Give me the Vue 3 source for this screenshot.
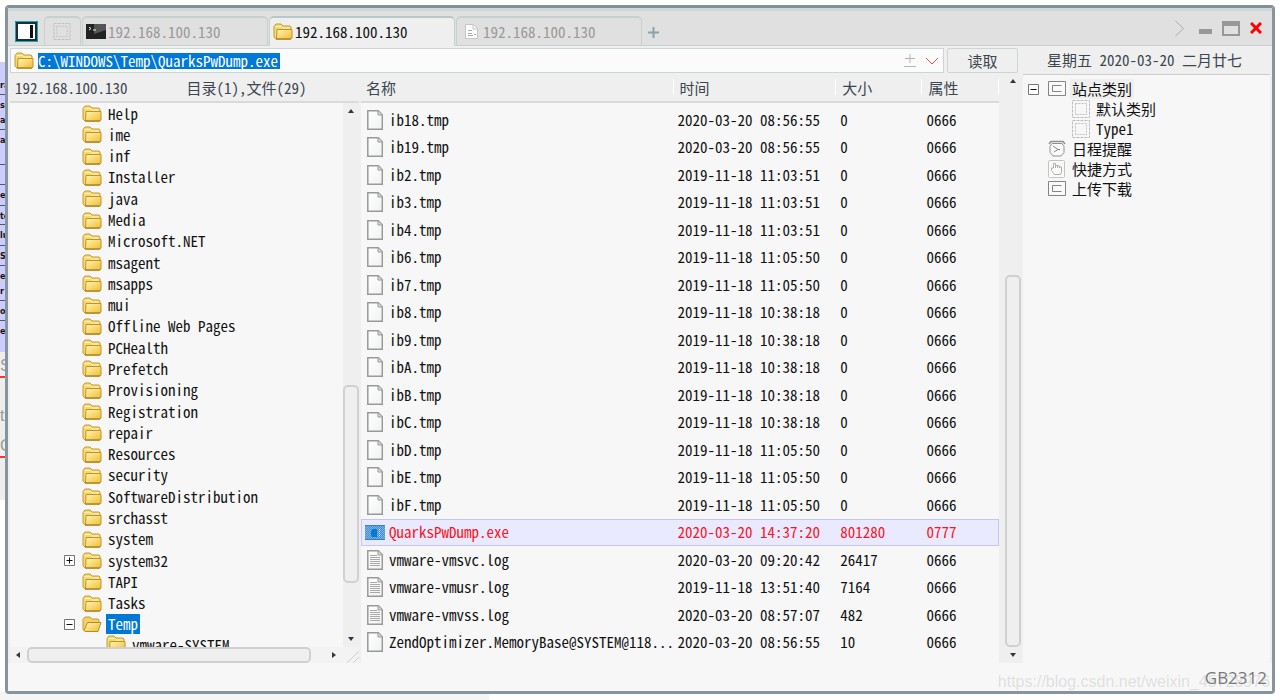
<script setup>
const dirs = ['Help', 'ime', 'inf', 'Installer', 'java', 'Media', 'Microsoft.NET', 'msagent', 'msapps', 'mui', 'Offline Web Pages', 'PCHealth', 'Prefetch', 'Provisioning', 'Registration', 'repair', 'Resources', 'security', 'SoftwareDistribution', 'srchasst', 'system', 'system32', 'TAPI', 'Tasks', 'Temp']
const marks = { system32: '+', Temp: '-' }
const a = '2020-03-20 08:56:55'
const b = '2019-11-18 11:03:51'
const c = '2019-11-18 11:05:50'
const d = '2019-11-18 10:38:18'
const files = [
  ['ib18.tmp', a, '0'], ['ib19.tmp', a, '0'], ['ib2.tmp', b, '0'], ['ib3.tmp', b, '0'], ['ib4.tmp', b, '0'],
  ['ib6.tmp', c, '0'], ['ib7.tmp', c, '0'], ['ib8.tmp', d, '0'], ['ib9.tmp', d, '0'], ['ibA.tmp', d, '0'],
  ['ibB.tmp', d, '0'], ['ibC.tmp', d, '0'], ['ibD.tmp', c, '0'], ['ibE.tmp', c, '0'], ['ibF.tmp', c, '0'],
  ['QuarksPwDump.exe', '2020-03-20 14:37:20', '801280', '0777'],
  ['vmware-vmsvc.log', '2020-03-20 09:20:42', '26417'],
  ['vmware-vmusr.log', '2019-11-18 13:51:40', '7164'],
  ['vmware-vmvss.log', '2020-03-20 08:57:07', '482'],
  ['ZendOptimizer.MemoryBase@SYSTEM@118...', a, '10']
]
const strip = [
  ['ra', 33], ['s a', 35], ['a', 35], ['', 20], ['er', 21], ['te', 19], ['lu', 21], ['Sa', 20], ['er r', 35], ['op', 20], ['e', 31]
]
const side = [
  { t: '站点类别', i: 'box', mark: true, sel: true },
  { t: '默认类别', i: 'dash', sub: true },
  { t: 'Type1', i: 'dash', sub: true },
  { t: '日程提醒', i: 'clock' },
  { t: '快捷方式', i: 'hand' },
  { t: '上传下载', i: 'box' }
]
</script>

<template>
  <div class="desk">
    <svg class="defs" aria-hidden="true">
      <defs>
        <linearGradient id="gold" x1="0" y1="0" x2="1" y2="1"><stop offset="0" stop-color="#fff6b0" /><stop offset="1" stop-color="#f0bd35" /></linearGradient>
        <linearGradient id="paper" x1="0" y1="0" x2="1" y2="1"><stop offset="0" stop-color="#fff" /><stop offset="1" stop-color="#f0f2f2" /></linearGradient>
        <pattern id="dither" width="2" height="2" patternUnits="userSpaceOnUse"><rect width="2" height="2" fill="#3d8fd6" /><path d="M0 0h1v1H0zM1 1h1v1H1z" fill="#85b5dc" /></pattern>
        <symbol id="folder" viewBox="0 0 20 17">
          <path d="M1 3.500L3 1h5l2 2h7l1 1v11l-1 1H3l-2-2z" fill="#f5d970" stroke="#c39a34" />
          <path d="M2.500 3.500h6l1.500 1.500h7" fill="none" stroke="#fff3b5" />
          <path d="M4 6.500h15v8.500l-1 1H3.500z" fill="url(#gold)" stroke="#c1922a" />
          <path d="M3 16h15" stroke="#a77c1c" />
        </symbol>
        <symbol id="open" viewBox="0 0 20 17">
          <path d="M1 3.500L3 1h5l2 2h6l1 1v3L15 15.500H3l-2-2z" fill="#f2d268" stroke="#c39a34" />
          <path d="M2 14.500L5.500 6.500H19l-3 9H3z" fill="url(#gold)" stroke="#b98a22" />
        </symbol>
        <symbol id="doc" viewBox="0 0 16 20">
          <path d="M.8.800h10.500l4 4v14.400H.8z" fill="url(#paper)" stroke="#999" stroke-width="1.500" />
          <path d="M11 1v4h4" fill="#ddd" stroke="#999" />
        </symbol>
        <symbol id="log" viewBox="0 0 16 20">
          <use href="#doc" />
          <path d="M3 5.500h7M3 7.500h10M3 9.500h10M3 11.500h10M3 13.500h10M3 15.500h10" stroke="#a8a8a8" />
        </symbol>
        <symbol id="exe" viewBox="0 0 20 15">
          <rect width="20" height="15" fill="url(#dither)" /><path d="M0 .5h20M0 14.500h20" stroke="#2f83ca" /><path d="M6 6l2-2h4v8H7l-1-2z" fill="#0878d8" /><path d="M14.500 4v8" stroke="#e4f0fa" stroke-dasharray="1 1" />
        </symbol>
        <symbol id="dash" viewBox="0 0 18 18">
          <path d="M.5.500h17v17H.5z" fill="none" stroke="#bdbdbd" stroke-dasharray="3 1" /><path d="M3.500 3.500h11v11h-11z" fill="none" stroke="#c2c2c2" stroke-dasharray="2 1" />
        </symbol>
        <symbol id="box" viewBox="0 0 18 18">
          <path d="M.5 1.500h17v14H.5z" fill="#fafafa" stroke="#858585" /><path d="M13.500 5.500h-9v6h9" fill="none" stroke="#858585" />
        </symbol>
        <symbol id="clock" viewBox="0 0 18 18">
          <path d="M1 4l2-2.500h12L17 4" fill="none" stroke="#909090" stroke-width="1.500" /><path d="M4 3.500h10l2 3v6l-3 3.500H5l-3-3.500v-6z" fill="#fafafa" stroke="#909090" /><path d="M5 6l5 3.500L6 12M10 9.500h2" fill="none" stroke="#858585" />
        </symbol>
        <symbol id="hand" viewBox="0 0 18 18">
          <rect x=".5" y=".5" width="16" height="17" rx="1" fill="#fafafa" stroke="#c4c4c4" /><path d="M6.500 14.500l-3-4V8h2V3.500h2V8V5.500h2V8V6h2v2V7h2v5l-1 2.500z" fill="#fff" stroke="#b5aca6" />
        </symbol>
      </defs>
    </svg>
    <div class="behind" aria-hidden="true">
      <div class="lav">
        <p v-for="(s, i) in strip" :key="i" :style="{ height: s[1] + 'px' }">{{ s[0] }}</p>
      </div>
      <div class="grey"><span>S</span><i></i><span>t</span><span>G</span><i></i></div>
    </div>
    <div class="under" aria-hidden="true"></div>
    <main class="win">
      <header class="title">
        <button class="toggle" aria-label="Toggle panel"><svg width="23" height="21"><path d="M1.500 1.500h20v18h-20z" fill="#fff" stroke="#173238" stroke-width="3" /><path d="M.5.500h22v20H.5z" fill="none" stroke="#23a3b5" /><path d="M15 4h3v13h-3z" fill="#111" /></svg></button>
        <nav class="tabs">
          <button class="tab mini" aria-label="Home"><svg width="18" height="17"><use href="#dash" /></svg></button>
          <button class="tab"><svg width="20" height="15"><path d="M0 0h20v15H0z" fill="#222" /><path d="M8 0h12v6L8 10z" fill="#555" /><path d="M3 3l2 1.500L3 6M7 6h3" stroke="#eee" fill="none" /></svg>192.168.100.130</button>
          <button class="tab on"><svg width="20" height="17"><use href="#folder" /></svg>192.168.100.130</button>
          <button class="tab doc"><svg width="13" height="15"><path d="M.5.500h8l4 4v10H.5z" fill="#fff" stroke="#c5c5c5" /><path d="M8 1v4h4" fill="none" stroke="#c5c5c5" /><path d="M3 6.500h4M3 9.500h4M3 11.500h5M9 10.500h2" stroke="#aaa" /></svg>192.168.100.130</button>
          <button class="add" aria-label="New tab"><svg width="11" height="11"><path d="M5.500 0v11M0 5.500h11" stroke="#8aa2ad" stroke-width="2" /></svg></button>
        </nav>
        <div class="ctl">
          <button aria-label="More"><svg width="10" height="17"><path d="M.5 1l8 7.500-8 7.500" fill="none" stroke="#aaa" /></svg></button>
          <button class="min" aria-label="Minimize"><svg width="13" height="5"><path d="M0 0h13v5H0z" fill="#989898" /></svg></button>
          <button aria-label="Maximize"><svg width="18" height="15"><path d="M1 1h16v13H1z" fill="none" stroke="#989898" stroke-width="2" /><path d="M0 2.500h18" stroke="#989898" stroke-width="5" /></svg></button>
          <button aria-label="Close"><svg width="12" height="12"><path d="M1 1l10 10M11 1L1 11" stroke="#f00" stroke-width="3" /></svg></button>
        </div>
      </header>
      <div class="body">
        <section class="left">
          <div class="bar">
            <div class="path">
              <svg width="20" height="17"><use href="#folder" /></svg>
              <label class="field"><input aria-label="Path" value="C:\WINDOWS\Temp\QuarksPwDump.exe" size="32" /></label>
              <svg class="pm" width="12" height="13"><path d="M6 0v9M1 4.500h10M0 12.500h12" stroke="#b5b5b5" /></svg>
              <svg width="14" height="8"><path d="M1 1l6 6 6-6" fill="none" stroke="#f24848" /></svg>
            </div>
            <button class="read">读取</button>
          </div>
          <div class="panes">
            <div class="dirs">
              <div class="info"><span>192.168.100.130</span><span>目录(1),文件(29)</span></div>
              <div class="view">
                <div class="treewrap">
                  <ul class="tree">
                    <li v-for="n in dirs" :key="n">
                      <span class="mark"><svg v-if="marks[n]" width="11" height="11"><path d="M.5.500h10v10H.5z" fill="#fff" stroke="#777" /><path d="M2.500 5.500h6" stroke="#111" /><path v-if="marks[n] === '+'" d="M5.500 2.500v6" stroke="#111" /></svg></span>
                      <svg width="20" height="17"><use :href="n === 'Temp' ? '#open' : '#folder'" /></svg>
                      <span class="name" :class="{ sel: n === 'Temp' }">{{ n }}</span>
                    </li>
                  </ul>
                  <div class="cut"><svg width="20" height="17"><use href="#folder" /></svg><span class="name">vmware-SYSTEM</span></div>
                </div>
                <div class="vs"><i class="up"></i><span class="gap"></span><b></b><span class="rest"></span><i class="down"></i></div>
              </div>
              <div class="hs"><i class="lt"></i><b></b><i class="rt"></i><svg width="15" height="15"><path d="M3 15L15 3M9 15l6-6" stroke="#ccc" /></svg></div>
            </div>
            <div class="files">
              <table>
                <colgroup><col class="c1" /><col class="c2" /><col class="c3" /><col class="c4" /></colgroup>
                <thead><tr><th>名称</th><th>时间</th><th>大小</th><th>属性</th></tr></thead>
                <tbody>
                  <tr v-for="f in files" :key="f[0]" :class="{ hot: f[3] }">
                    <td><div class="fn"><svg :width="f[3] ? 20 : 16" :height="f[3] ? 15 : 20"><use :href="f[3] ? '#exe' : f[0].endsWith('.log') ? '#log' : '#doc'" /></svg><span>{{ f[0] }}</span></div></td>
                    <td>{{ f[1] }}</td><td>{{ f[2] }}</td><td>{{ f[3] || '0666' }}</td>
                  </tr>
                </tbody>
              </table>
            </div>
            <div class="vs main"><i class="up"></i><span class="gap"></span><b></b><span class="rest"></span><i class="down"></i></div>
          </div>
        </section>
        <aside class="right">
          <div class="date">星期五 2020-03-20 二月廿七</div>
          <ul>
            <li v-for="s in side" :key="s.t" :class="{ sub: s.sub }">
              <span class="mark"><svg v-if="s.mark" width="11" height="11"><path d="M.5.500h10v10H.5z" fill="#fff" stroke="#777" /><path d="M2.500 5.500h6" stroke="#111" /></svg></span>
              <svg width="18" height="18"><use :href="'#' + s.i" /></svg>
              <span class="name" :class="{ pale: s.sel }">{{ s.t }}</span>
            </li>
          </ul>
        </aside>
      </div>
      <footer>GB2312</footer>
    </main>
    <div class="water">https://blog.csdn.net/weixin_45728976</div>
  </div>
</template>

<style>
html, body { margin: 0; background: #fff; }
</style>

<style scoped>
* { box-sizing: border-box; }
.desk { position: relative; height: 100vh; min-height: 500px; overflow: hidden; padding: 5px 5px 6px; font: 15px/20px "Noto Sans Mono CJK SC", "Liberation Mono", "Noto Sans CJK SC", monospace; color: #111; }
.defs { position: absolute; width: 0; height: 0; }
svg { display: block; flex: none; }
button, input { font: inherit; color: inherit; background: none; border: 0; padding: 0; margin: 0; }
ul, p { margin: 0; padding: 0; list-style: none; }
.behind { position: absolute; left: 0; top: 62px; width: 8px; overflow: hidden; }
.lav { background: #ccf; }
.lav p { overflow: hidden; border-bottom: 1px solid #556; font: bold 8px/15px "DejaVu Sans", sans-serif; padding-top: 3px; width: 8px; }
.lav p:first-child { padding-top: 16px; }
.lav p:last-child { border: 0; }
.grey { background: #eee; height: 148px; color: #999; font: 16px/20px "Liberation Sans", sans-serif; padding-top: 4px; }
.grey span { display: block; height: 20px; }
.grey i { display: block; height: 2px; background: #f33; }
.grey i + span { margin-top: 28px; }
.grey span + span { margin-top: 10px; }
.under { position: absolute; left: 0; bottom: 0; width: 489px; height: 8px; background: #f5f5f5; }
.win { position: relative; height: 100%; display: flex; flex-direction: column; background: #f7f7f7; border: 3px solid #87949d; border-top-color: #838f99; border-radius: 4px; }
.title { flex: none; height: 38px; background: #e0e0e0; border-top: 3px solid #cdd7d5; border-bottom: 1px solid #c5d1cf; display: flex; align-items: flex-end; padding-left: 7px; }
.toggle { margin-bottom: 3px; margin-right: 6px; }
.tabs { display: flex; align-items: flex-end; flex: 1; gap: 1px; margin-bottom: -1px; }
.tab { height: 30px; width: 186px; display: flex; align-items: center; gap: 2px; padding: 0 0 0 3px; border: 1px solid #c5d1cf; border-top-width: 2px; border-radius: 5px 5px 0 0; color: #999; }
.tab.mini { width: 37px; padding-left: 8px; }
.tab.on { background: #efefef; border-bottom-color: #efefef; border-top-color: #b5cac8; color: #111; }
.tab.doc { padding-left: 8px; gap: 5px; }
.add { height: 28px; padding: 0 5px; }
.ctl { display: flex; align-items: center; gap: 10px; height: 34px; padding-right: 10px; }
.min { padding-top: 6px; margin-left: 4px; }
.body { flex: 1; min-height: 0; display: flex; }
.left { flex: 1; min-width: 0; display: flex; flex-direction: column; background: #efefef; padding-left: 2px; }
.bar { display: flex; gap: 3px; padding: 2px 3px 0 0; height: 27px; flex: none; }
.path { flex: 1; display: flex; align-items: center; gap: 4px; border: 1px solid #ccd6d4; background: #fbfbfb; padding: 0 4px 0 3px; }
.pm { margin-right: 5px; }
.field { flex: 1; display: flex; }
input { background: #0078d7; color: #fff; height: 16px; line-height: 16px; width: 242px; outline: 0; }
.read { width: 71px; border: 1px solid #ccd6d4; border-radius: 2px; color: #3b4650; }
.panes { flex: 1; min-height: 0; display: flex; }
.dirs { flex: 35 1 0; min-width: 0; display: flex; flex-direction: column; border-right: 2px solid #efefef; }
.info { height: 30px; flex: none; display: flex; gap: 59px; align-items: center; padding: 2px 0 0 5px; color: #3b4650; border-bottom: 2px solid #dadada; }
.view { flex: 1; min-height: 0; display: flex; background: #f7f7f7; }
.treewrap { flex: 1; min-width: 0; display: flex; flex-direction: column; overflow: hidden; }
.tree { flex: 1; display: grid; grid-auto-rows: 1fr; }
li { display: flex; align-items: center; min-height: 0; }
.tree li { padding-left: 54px; }
.mark { width: 18px; flex: none; }
.name { padding: 0 2px; margin-left: 4px; white-space: pre; }
.sel { background: #0078d7; color: #fff; }
.cut { flex: none; height: 12px; display: flex; align-items: flex-start; overflow: hidden; padding-left: 96px; }
.vs { width: 16px; flex: none; display: flex; flex-direction: column; align-items: center; background: #efefef; padding: 6px 0; }
.vs b { width: 16px; border: 2px solid #d0d0d0; border-radius: 5px; flex: 195 1 0; }
.gap { flex: 275 1 0; }
.rest { flex: 55 1 0; }
.main { width: 17px; }
.main b { flex: 370 1 0; }
.main .gap { flex: 193 1 0; }
.main .rest { flex: 6 1 0; }
i.up, i.down { border: 3px solid transparent; width: 0; height: 0; }
i.up { border-top: 0; border-bottom: 4px solid #334; }
i.down { border-bottom: 0; border-top: 4px solid #334; }
.hs { flex: none; height: 16px; display: flex; align-items: center; padding-left: 6px; background: #f3f3f3; }
.hs b { flex: 1; height: 16px; border: 2px solid #d0d0d0; border-radius: 5px; background: #efefef; margin: 0 21px 0 7px; }
i.lt, i.rt { border: 3px solid transparent; width: 0; height: 0; }
i.lt { border-left: 0; border-right: 4px solid #334; }
i.rt { border-right: 0; border-left: 4px solid #334; margin-right: 8px; }
.files { flex: 64 1 0; min-width: 0; background: #f7f7f7; padding-bottom: 7px; margin-right: 5px; }
table { width: 100%; height: 100%; border-collapse: separate; border-spacing: 0; table-layout: fixed; }
.c1 { width: 49%; }
.c2 { width: 25.5%; }
.c3 { width: 13.5%; }
.c4 { width: 12%; }
th { height: 33px; font-weight: 400; text-align: left; color: #3b4650; background: linear-gradient(#fff, #fff) right 6px / 1px 16px no-repeat, linear-gradient(#efefef 28px, #dadada 28px, #dadada 30px, #f7f7f7 30px); padding: 0 6px 3px; }
th:first-child { padding-left: 5px; }
td { padding: 0 0 0 4px; white-space: nowrap; line-height: 20px; border: 1px solid transparent; border-width: 1px 0; }
td:first-child { padding-left: 6px; }
.fn { display: flex; align-items: center; gap: 6px; }
.hot { color: #fb1522; background: #e9e9ff; }
.hot td { border-color: #c5c5f2; }
.hot td:first-child { border-left-width: 1px; padding-left: 3px; }
.hot td:last-child { border-right-width: 1px; }
.hot .fn { gap: 4px; }
.right { width: 251px; flex: none; border-left: 2px solid #efefef; border-right: 2px solid #efefef; }
.date { height: 29px; line-height: 28px; text-align: center; background: #efefef; border-bottom: 1px solid #ccc; color: #3b4650; white-space: pre; padding-right: 4px; }
.right ul { padding: 4px 0 0 5px; }
.right li { height: 20px; }
.right .mark { width: 20px; }
.right .sub .mark { width: 44px; }
.pale { background: #efefef; }
footer { flex: none; height: 28px; font: 17px/30px "Open Sans", sans-serif; color: #777; text-align: right; padding-right: 5px; }
.water { position: absolute; right: 10px; bottom: 8px; font: 16px/20px "Liberation Sans", sans-serif; color: #9994; }
</style>
